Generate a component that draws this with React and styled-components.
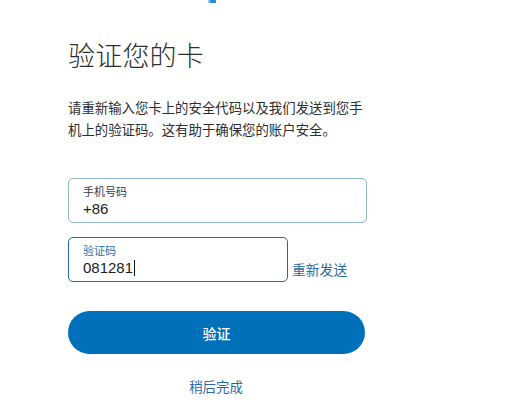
import React from "react";
import styled, { createGlobalStyle } from "styled-components";

const Global = createGlobalStyle`
  html, body { margin: 0; padding: 0; background: #ffffff; }
  body { font-family: "Liberation Sans", "Noto Sans CJK SC", sans-serif; }
`;

const Page = styled.div`
  width: 521px;
  height: 415px;
  background: #fff;
  overflow: hidden;
  display: flex;
  flex-direction: column;
`;

const LogoStrip = styled.div`
  height: 4px;
  display: flex;
  padding-left: 208px;
`;

const Content = styled.div`
  padding-left: 68px;
  width: 299px;
  display: flex;
  flex-direction: column;
`;

const Title = styled.h1`
  margin: 33px 0 0;
  font-family: "Noto Sans CJK SC", sans-serif;
  font-weight: 300;
  font-size: 27px;
  line-height: 36px;
  color: #2c2e2f;
  letter-spacing: 0.2px;
`;

const Intro = styled.p`
  margin: 23px 0 0;
  font-family: "Noto Sans CJK SC", sans-serif;
  font-size: 13.4px;
  line-height: 22px;
  color: #2c2e2f;
  width: 300px;
`;

const Field = styled.div`
  box-sizing: border-box;
  width: ${(p) => p.$width}px;
  height: 45px;
  border: 1px solid ${(p) => (p.$active ? "#1f6aa3" : "#8fb5cf")};
  border-radius: 5px;
  padding: 5px 14px 0;
  display: flex;
  flex-direction: column;
`;

const FieldLabel = styled.span`
  font-family: "Noto Sans CJK SC", sans-serif;
  font-size: 11px;
  line-height: 14px;
  color: ${(p) => (p.$active ? "#2a72ad" : "#3a3a3a")};
`;

const FieldValue = styled.span`
  font-family: "Liberation Sans", sans-serif;
  font-size: 15px;
  line-height: 22px;
  color: #222;
  display: flex;
  align-items: center;
`;

const Caret = styled.span`
  display: inline-block;
  width: 1px;
  height: 16px;
  background: #111;
  margin-left: 1px;
`;

const PhoneWrap = styled.div`
  margin-top: 38px;
`;

const CodeRow = styled.div`
  margin-top: 14px;
  display: flex;
  align-items: flex-end;
  gap: 4px;
`;

const Resend = styled.a`
  font-family: "Noto Sans CJK SC", sans-serif;
  font-size: 13.8px;
  line-height: 20px;
  color: #2a6aa3;
  padding-bottom: 3px;
  cursor: pointer;
  white-space: nowrap;
`;

const VerifyButton = styled.button`
  margin-top: 29px;
  width: 297px;
  height: 43px;
  border: none;
  border-radius: 22px;
  background: #0070ba;
  color: #fff;
  font-family: "Noto Sans CJK SC", sans-serif;
  font-size: 14px;
  font-weight: 500;
  cursor: pointer;
`;

const Later = styled.a`
  margin-top: 22px;
  align-self: center;
  margin-right: 3px;
  font-family: "Noto Sans CJK SC", sans-serif;
  font-size: 13.4px;
  line-height: 20px;
  color: #2a6aa3;
  cursor: pointer;
`;

export default function App() {
  return (
    <Page>
      <Global />
      <LogoStrip>
        <svg width="10" height="4" viewBox="0 0 10 4">
          <rect x="0" y="0" width="3" height="3" fill="#9cc9ea" />
          <rect x="2" y="0" width="6" height="3" fill="#2b8ed3" />
        </svg>
      </LogoStrip>
      <Content>
        <Title>验证您的卡</Title>
        <Intro>请重新输入您卡上的安全代码以及我们发送到您手机上的验证码。这有助于确保您的账户安全。</Intro>
        <PhoneWrap>
          <Field $width={299}>
            <FieldLabel>手机号码</FieldLabel>
            <FieldValue>+86</FieldValue>
          </Field>
        </PhoneWrap>
        <CodeRow>
          <Field $width={220} $active>
            <FieldLabel $active>验证码</FieldLabel>
            <FieldValue>
              081281
              <Caret />
            </FieldValue>
          </Field>
          <Resend>重新发送</Resend>
        </CodeRow>
        <VerifyButton>验证</VerifyButton>
        <Later>稍后完成</Later>
      </Content>
    </Page>
  );
}
